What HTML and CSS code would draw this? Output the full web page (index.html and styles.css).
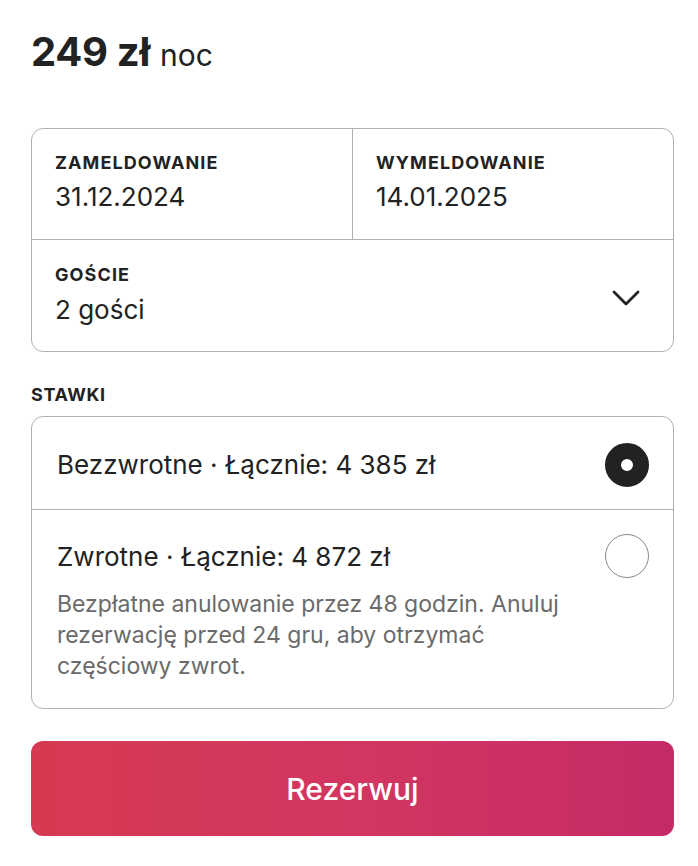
FILE: index.html
```html
<!DOCTYPE html>
<html lang="pl">
<head>
<meta charset="utf-8">
<link rel="stylesheet" href="styles.css">
</head>
<body>
<div class="widget">
  <div class="price"><span class="amount">249 zł</span> <span class="unit">noc</span></div>

  <div class="dates">
    <div class="row top">
      <div class="cell left">
        <div class="label">ZAMELDOWANIE</div>
        <div class="value">31.12.2024</div>
      </div>
      <div class="cell">
        <div class="label">WYMELDOWANIE</div>
        <div class="value">14.01.2025</div>
      </div>
    </div>
    <div class="row guests">
      <div class="cell">
        <div class="label">GOŚCIE</div>
        <div class="value">2 gości</div>
      </div>
      <svg class="chevron" viewBox="0 0 28 16" width="28" height="16" aria-hidden="true">
        <path d="M2 2 L14 14 L26 2" fill="none" stroke="#222" stroke-width="2.8" stroke-linecap="round" stroke-linejoin="round"/>
      </svg>
    </div>
  </div>

  <div class="section-title">STAWKI</div>

  <div class="rates">
    <div class="rate first">
      <div class="rate-text">
        <div class="rate-name">Bezzwrotne · Łącznie: 4 385 zł</div>
      </div>
      <span class="radio checked"></span>
    </div>
    <div class="rate second">
      <div class="rate-text">
        <div class="rate-name">Zwrotne · Łącznie: 4 872 zł</div>
        <div class="rate-desc">Bezpłatne anulowanie przez 48 godzin. Anuluj rezerwację przed 24 gru, aby otrzymać częściowy zwrot.</div>
      </div>
      <span class="radio"></span>
    </div>
  </div>

  <button class="reserve">Rezerwuj</button>
</div>
</body>
</html>
```

FILE: styles.css
```css
html, body {
  margin: 0;
  padding: 0;
  background: #fff;
}
body {
  font-family: Inter, "Noto Sans", "Liberation Sans", sans-serif;
  color: #222;
}
.widget {
  padding: 28px 24px 0 31px;
  width: 643px;
}
.price {
  height: 48px;
  line-height: 48px;
  display: flex;
  align-items: baseline;
  gap: 10px;
  margin-bottom: 52px;
}
.amount {
  font-size: 40px;
  font-weight: 700;
  letter-spacing: -0.3px;
}
.unit {
  font-size: 30px;
  font-weight: 400;
}
.dates {
  border: 1px solid #b0b0b0;
  border-radius: 12px;
  overflow: hidden;
}
.row {
  display: flex;
}
.top {
  border-bottom: 1px solid #b0b0b0;
  height: 110px;
}
.top .cell {
  flex: 1;
}
.cell {
  padding: 23px 23px 0 23px;
}
.cell.left {
  border-right: 1px solid #b0b0b0;
}
.label {
  font-size: 18px;
  font-weight: 700;
  letter-spacing: 1.1px;
  line-height: 22px;
}
.value {
  font-size: 26px;
  line-height: 34px;
  margin-top: 6px;
}
.guests {
  height: 111px;
  align-items: flex-start;
  justify-content: space-between;
}
.guests .cell {
  padding-top: 24px;
}
.guests .value {
  margin-top: 7px;
}
.chevron {
  margin: 50px 33px 0 0;
}
.section-title {
  font-size: 18px;
  font-weight: 700;
  letter-spacing: 0.6px;
  line-height: 22px;
  margin: 32px 0 10px;
}
.rates {
  border: 1px solid #b0b0b0;
  border-radius: 12px;
  overflow: hidden;
}
.rate {
  display: flex;
  justify-content: space-between;
  align-items: flex-start;
  padding: 0 24px 0 25px;
}
.rate.first {
  box-sizing: border-box;
  height: 93px;
  padding-top: 4px;
  align-items: center;
  border-bottom: 1px solid #b0b0b0;
}
.rate.second {
  padding-top: 30px;
  padding-bottom: 26.5px;
}
.rate-name {
  font-size: 26px;
  line-height: 34px;
}
.rate-desc {
  font-size: 23px;
  line-height: 31px;
  color: #6a6a6a;
  margin-top: 14.5px;
  max-width: 520px;
}
.radio {
  box-sizing: border-box;
  width: 44px;
  height: 44px;
  border-radius: 50%;
  border: 1.5px solid #8a8a8a;
  flex: none;
  background: #fff;
}
.radio.checked {
  border: 16px solid #222;
}
.second .radio {
  margin-top: -6px;
}
.reserve {
  display: block;
  width: 100%;
  height: 95px;
  margin-top: 32px;
  border: 0;
  border-radius: 12px;
  background: linear-gradient(90deg, #d63a52 0%, #d23660 50%, #c52a67 100%);
  color: #fff;
  font-family: Inter, "Noto Sans", sans-serif;
  font-size: 30px;
  font-weight: 500;
}
```
